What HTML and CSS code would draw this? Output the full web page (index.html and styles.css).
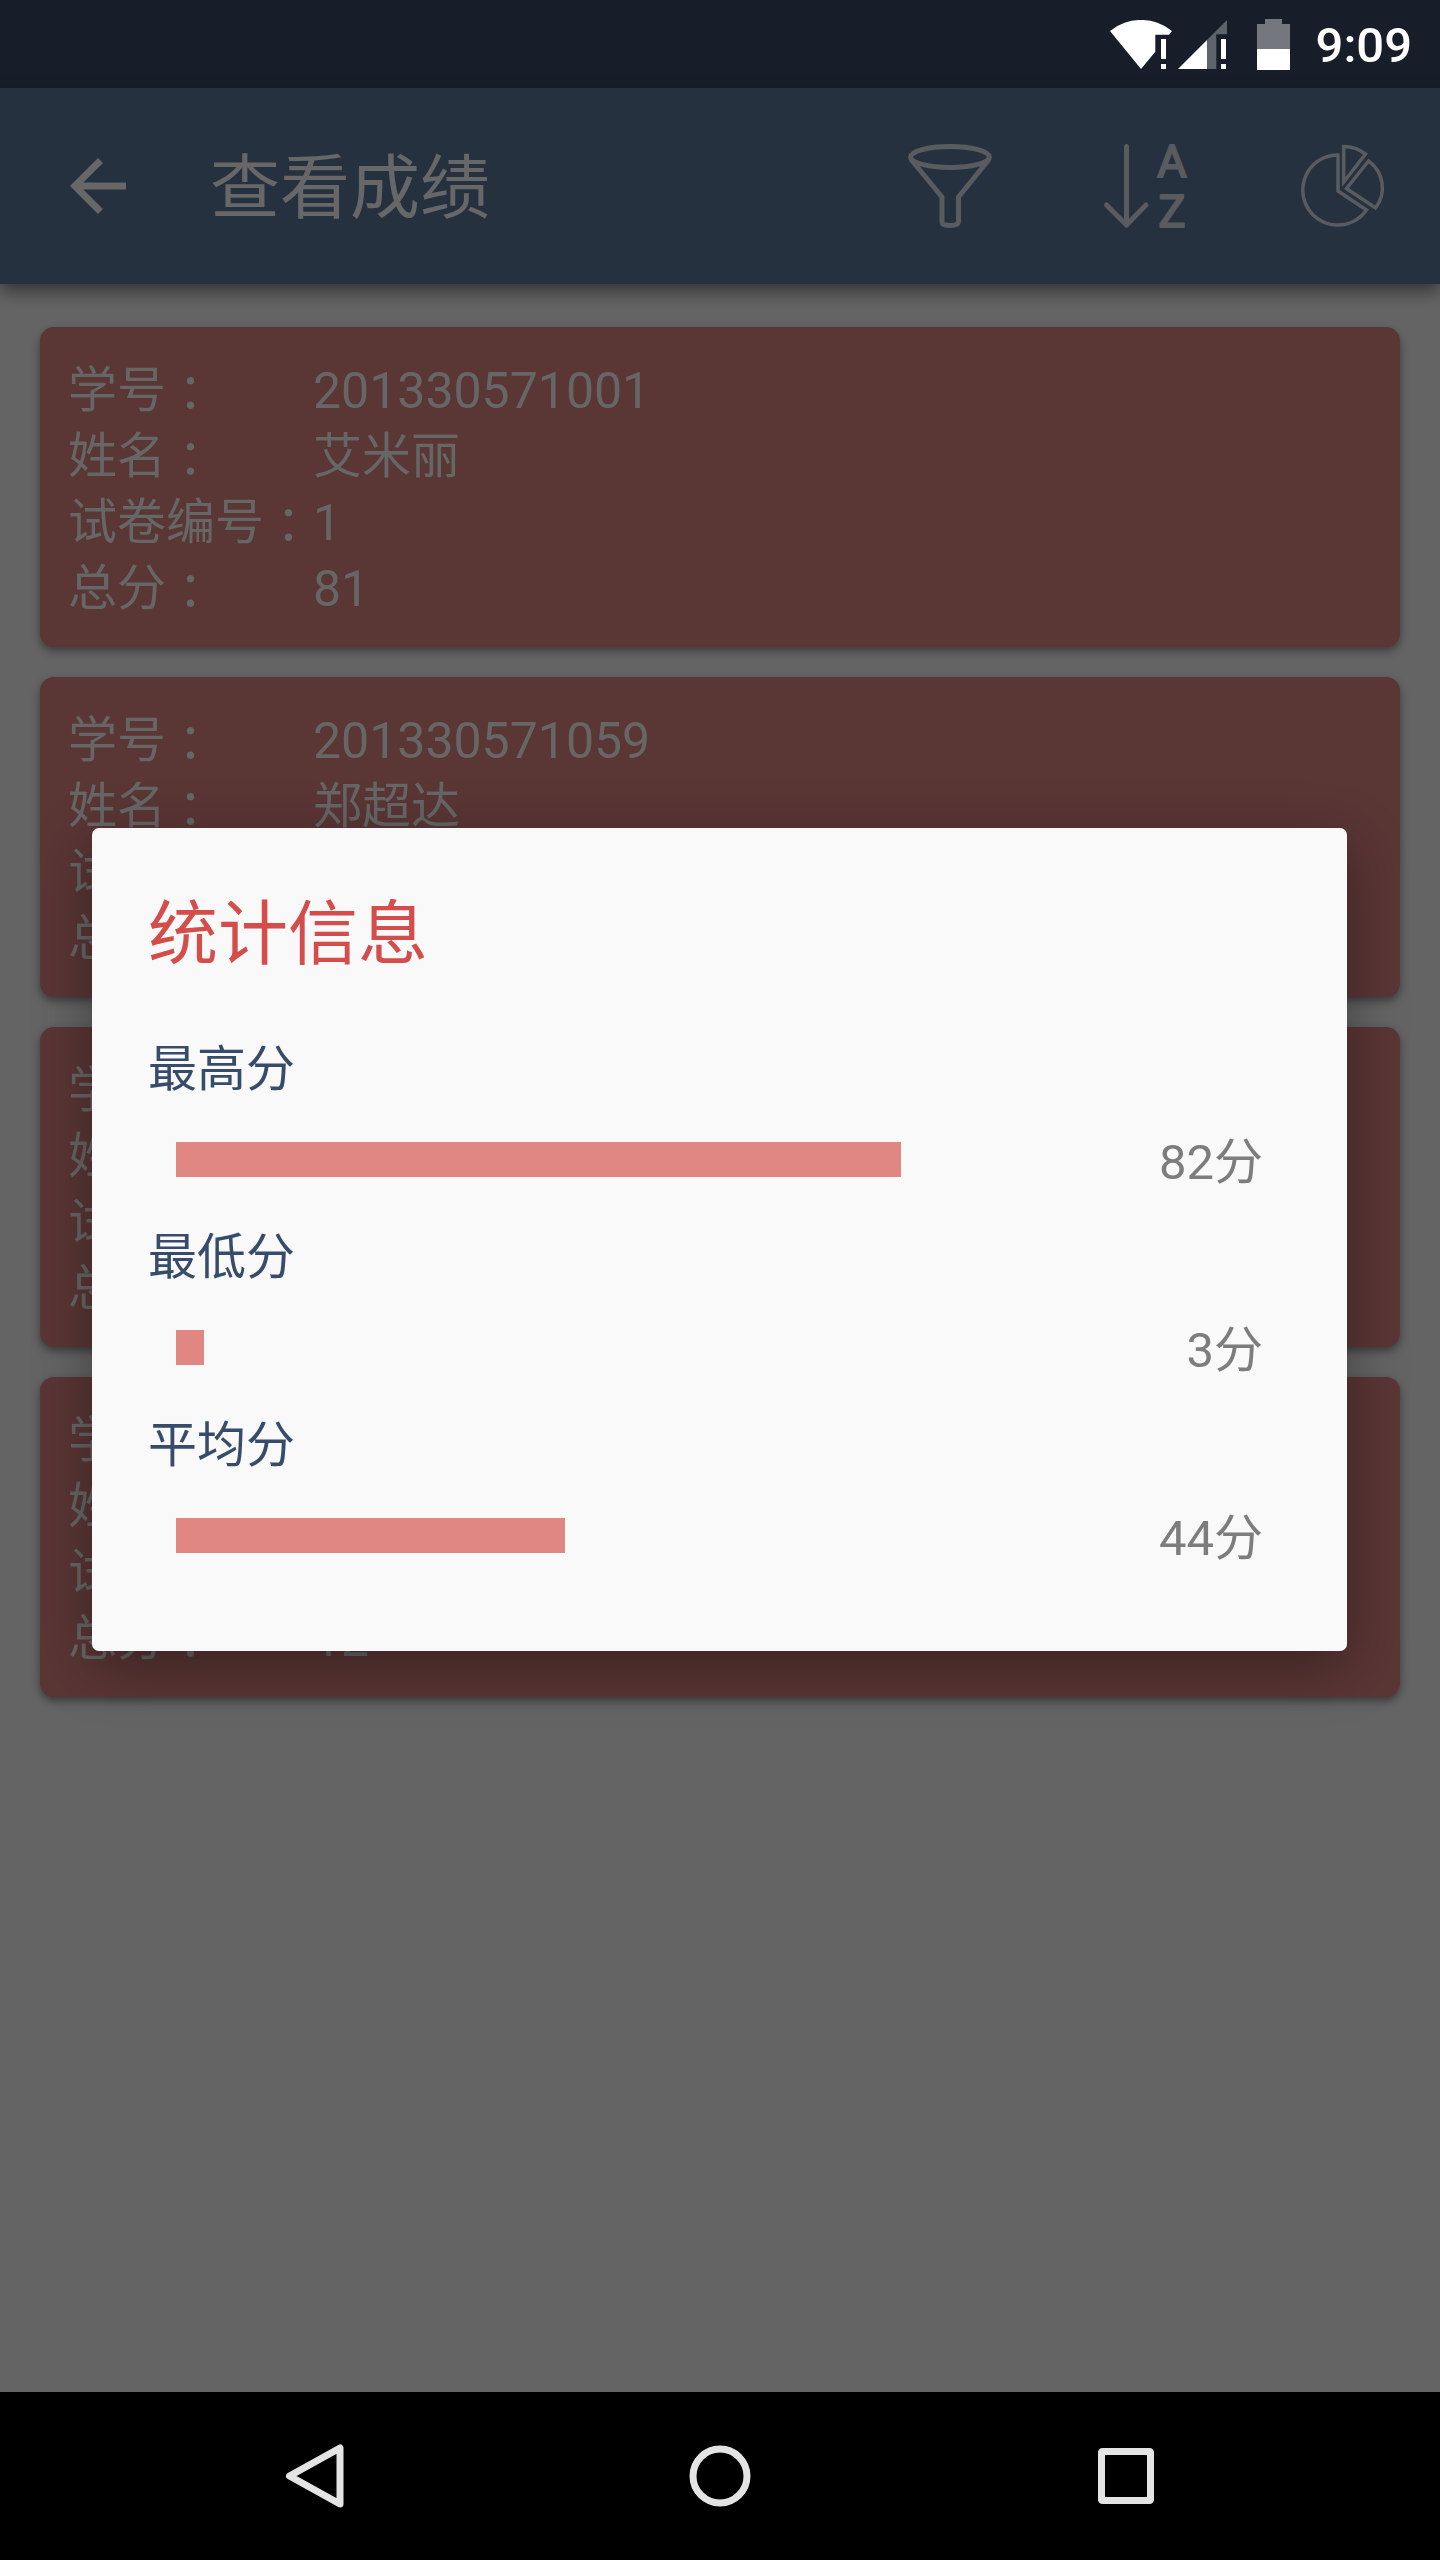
FILE: index.html
```html
<!DOCTYPE html>
<html lang="zh-CN">
<head>
<meta charset="utf-8">
<meta name="viewport" content="width=device-width, initial-scale=1">
<title>查看成绩</title>
<link rel="stylesheet" href="styles.css">
</head>
<body>
<div class="status-bar">
  <svg class="status-wifi" width="62" height="49" viewBox="0 0 62 49" fill="#fff" aria-hidden="true">
    <path d="M0 11A49 49 0 0 1 62 11L59 14.7H45.3V31.7L31 49Z"/>
    <path d="M51 19h5v20h-5zM51 44h5v5h-5z"/>
  </svg>
  <svg class="status-signal" width="49" height="49" viewBox="0 0 49 49" fill="#fff" aria-hidden="true">
    <path d="M29 20L49 0V14.3H38.3V49H29Z" fill="#5d646b"/>
    <path d="M0 49L29 20V49ZM43 19h5v20h-5zM43 44h5v5h-5z"/>
  </svg>
  <svg class="status-battery" width="33" height="51" viewBox="0 0 33 51" aria-hidden="true">
    <path d="M8 0H25V5H33V30H0V5H8Z" fill="#74787e"/>
    <path d="M0 30H33V51H0Z" fill="#fff"/>
  </svg>
  <time class="clock">9:09</time>
</div>

<div class="app">
  <header class="toolbar">
    <button class="icon-button" type="button" aria-label="返回">
      <svg viewBox="0 0 24 24" fill="#676767" aria-hidden="true"><path d="M20 11H7.83l5.59-5.59L12 4l-8 8 8 8 1.41-1.41L7.83 13H20v-2z"/></svg>
    </button>
    <h1 class="toolbar-title">查看成绩</h1>
    <div class="toolbar-actions">
      <button class="icon-button" type="button" aria-label="筛选">
        <svg class="line-icon" viewBox="0 0 84 84" stroke-width="5" aria-hidden="true">
          <ellipse cx="42" cy="13" rx="39.5" ry="10.5"/>
          <path d="M3.500 16L34 53V78Q34 81.500 42 81.500T50.500 78V53L80.500 16"/>
        </svg>
      </button>
      <button class="icon-button" type="button" aria-label="排序">
        <svg class="line-icon" viewBox="0 0 84 84" stroke-width="5" aria-hidden="true">
          <path d="M22.500 2.500V81M2.500 61L22.500 81L42 61"/>
          <text class="sort-letter" x="68" y="33">A</text>
          <text class="sort-letter" x="68" y="83">Z</text>
        </svg>
      </button>
      <button class="icon-button" type="button" aria-label="统计">
        <svg class="line-icon sharp" viewBox="0 0 84 84" stroke-width="3.500" aria-hidden="true">
          <path d="M38 11V47L66.500 66A35 35 0 1 1 38 11Z"/>
          <path d="M43.700 2.500V38L65.500 10A37 37 0 0 0 43.700 2.500Z"/>
          <path d="M68.500 17L46.500 44.500L75.500 64A33 33 0 0 0 68.500 17Z"/>
        </svg>
      </button>
    </div>
  </header>

  <main class="score-list">
    <dl class="score-card">
      <dt>学号<span class="colon" lang="zh-TW">：</span></dt><dd class="number">201330571001</dd>
      <dt>姓名<span class="colon" lang="zh-TW">：</span></dt><dd>艾米丽</dd>
      <dt>试卷编号<span class="colon" lang="zh-TW">：</span></dt><dd class="number">1</dd>
      <dt>总分<span class="colon" lang="zh-TW">：</span></dt><dd class="number">81</dd>
    </dl>
    <dl class="score-card">
      <dt>学号<span class="colon" lang="zh-TW">：</span></dt><dd class="number">201330571059</dd>
      <dt>姓名<span class="colon" lang="zh-TW">：</span></dt><dd>郑超达</dd>
      <dt>试卷编号<span class="colon" lang="zh-TW">：</span></dt><dd></dd>
      <dt>总分<span class="colon" lang="zh-TW">：</span></dt><dd></dd>
    </dl>
    <dl class="score-card">
      <dt>学号<span class="colon" lang="zh-TW">：</span></dt><dd></dd>
      <dt>姓名<span class="colon" lang="zh-TW">：</span></dt><dd></dd>
      <dt>试卷编号<span class="colon" lang="zh-TW">：</span></dt><dd></dd>
      <dt>总分<span class="colon" lang="zh-TW">：</span></dt><dd></dd>
    </dl>
    <dl class="score-card">
      <dt>学号<span class="colon" lang="zh-TW">：</span></dt><dd></dd>
      <dt>姓名<span class="colon" lang="zh-TW">：</span></dt><dd></dd>
      <dt>试卷编号<span class="colon" lang="zh-TW">：</span></dt><dd></dd>
      <dt>总分<span class="colon" lang="zh-TW">：</span></dt><dd class="number">12</dd>
    </dl>
  </main>

  <div class="overlay">
    <dialog class="stats" open aria-labelledby="stats-title">
      <h2 class="stats-title" id="stats-title">统计信息</h2>
      <div class="stat-list">
        <section class="stat">
          <h3 class="stat-name">最高分</h3>
          <div class="stat-row">
            <div class="track"><div class="bar" style="width: 82%"></div></div>
            <span class="stat-value">82分</span>
          </div>
        </section>
        <section class="stat">
          <h3 class="stat-name">最低分</h3>
          <div class="stat-row">
            <div class="track"><div class="bar" style="width: 3%"></div></div>
            <span class="stat-value">3分</span>
          </div>
        </section>
        <section class="stat">
          <h3 class="stat-name">平均分</h3>
          <div class="stat-row">
            <div class="track"><div class="bar" style="width: 44%"></div></div>
            <span class="stat-value">44分</span>
          </div>
        </section>
      </div>
    </dialog>
  </div>
</div>

<nav class="nav-bar" aria-label="系统导航">
  <button class="nav-button" type="button" aria-label="返回">
    <svg width="84" height="84" viewBox="0 0 84 84" aria-hidden="true"><path d="M68 14V70L17.500 42Z"/></svg>
  </button>
  <button class="nav-button" type="button" aria-label="主屏幕">
    <svg width="84" height="84" viewBox="0 0 84 84" aria-hidden="true"><circle cx="42" cy="42" r="27"/></svg>
  </button>
  <button class="nav-button" type="button" aria-label="最近任务">
    <svg width="84" height="84" viewBox="0 0 84 84" aria-hidden="true"><rect x="17.500" y="17.500" width="49" height="49" rx="1"/></svg>
  </button>
</nav>
</body>
</html>
```

FILE: styles.css
```css
* {
  box-sizing: border-box;
}

body {
  margin: 0;
  min-height: 100vh;
  display: flex;
  flex-direction: column;
  background: #646464;
  color: #666;
  font-family: Roboto, "Noto Sans CJK SC", sans-serif;
  font-size: 49px;
  line-height: 66px;
}

h1, h2, h3, dl, dd {
  margin: 0;
  font-weight: 400;
}

button {
  padding: 0;
  border: 0;
  background: none;
  font: inherit;
  cursor: pointer;
}

svg {
  display: block;
}

/* Status bar */
.status-bar {
  height: 88px;
  padding: 0 28px;
  display: flex;
  align-items: center;
  justify-content: flex-end;
  background: #171e29;
  color: #fff;
}

.status-signal {
  margin-left: 6px;
}

.status-battery {
  margin-left: 30px;
}

.clock {
  margin-left: 26px;
  padding-top: 4px;
  font-weight: 500;
}

/* Toolbar and list */
.app {
  position: relative;
  flex: 1;
  display: flex;
  flex-direction: column;
}

.toolbar {
  height: 196px;
  padding: 0 56px;
  display: flex;
  align-items: center;
  background: #263140;
  box-shadow: 0 8px 16px rgba(0, 0, 0, 0.45);
}

.toolbar-title {
  flex: 1;
  margin-left: 70px;
  padding-top: 6px;
  color: #676767;
  font-size: 70px;
  line-height: 84px;
}

.toolbar-actions {
  display: flex;
  gap: 112px;
}

.icon-button {
  width: 84px;
  height: 84px;
}

.line-icon {
  overflow: visible;
  fill: none;
  stroke: #595b5e;
  stroke-linecap: round;
  stroke-linejoin: round;
}

.sharp {
  stroke-linejoin: miter;
}

.sort-letter {
  fill: #595b5e;
  stroke-width: 2px;
  font-size: 45px;
  text-anchor: middle;
}

.score-list {
  flex: 1;
  padding: 43px 40px;
  display: flex;
  flex-direction: column;
  gap: 30px;
}

.score-card {
  padding: 31px 28px 25px;
  display: grid;
  grid-template-columns: 245px 1fr;
  grid-auto-rows: 66px;
  border-radius: 14px;
  background: #5a3635;
  box-shadow: 0 4px 8px rgba(0, 0, 0, 0.4);
  white-space: nowrap;
}

.colon {
  font-family: "Noto Sans CJK TC", sans-serif;
  line-height: 0;
  vertical-align: -4px;
}

.number {
  font-size: 50px;
}

/* Statistics dialog */
.overlay {
  position: absolute;
  inset: 0;
  display: grid;
  align-items: center;
  padding: 0 93px 1px 92px;
}

.stats {
  position: static;
  width: 100%;
  margin: 0;
  padding: 65px 56px 83px;
  border: 0;
  border-radius: 7px;
  background: #f9f9f9;
  box-shadow: 0 16px 56px rgba(0, 0, 0, 0.36);
}

.stats-title {
  color: #d44d4a;
  font-size: 70px;
  line-height: 84px;
}

.stat-list {
  margin-top: 60px;
  display: grid;
  gap: 33px;
}

.stat {
  display: grid;
  gap: 23px;
}

.stat-name {
  color: #374c6b;
  font-size: 49px;
}

.stat-row {
  padding: 0 28px;
  display: flex;
  align-items: center;
}

.track {
  flex: 1;
}

.bar {
  min-width: 28px;
  height: 35px;
  background: #e08784;
}

.stat-value {
  width: 203px;
  padding-top: 8px;
  color: #7d7d7d;
  line-height: 58px;
  text-align: right;
}

/* System navigation */
.nav-bar {
  height: 168px;
  padding: 0 111px;
  display: flex;
  background: #000;
}

.nav-button {
  flex: 1;
  display: grid;
  place-items: center;
  fill: none;
  stroke: #e4e4e4;
  stroke-width: 7px;
  stroke-linejoin: round;
}
```
